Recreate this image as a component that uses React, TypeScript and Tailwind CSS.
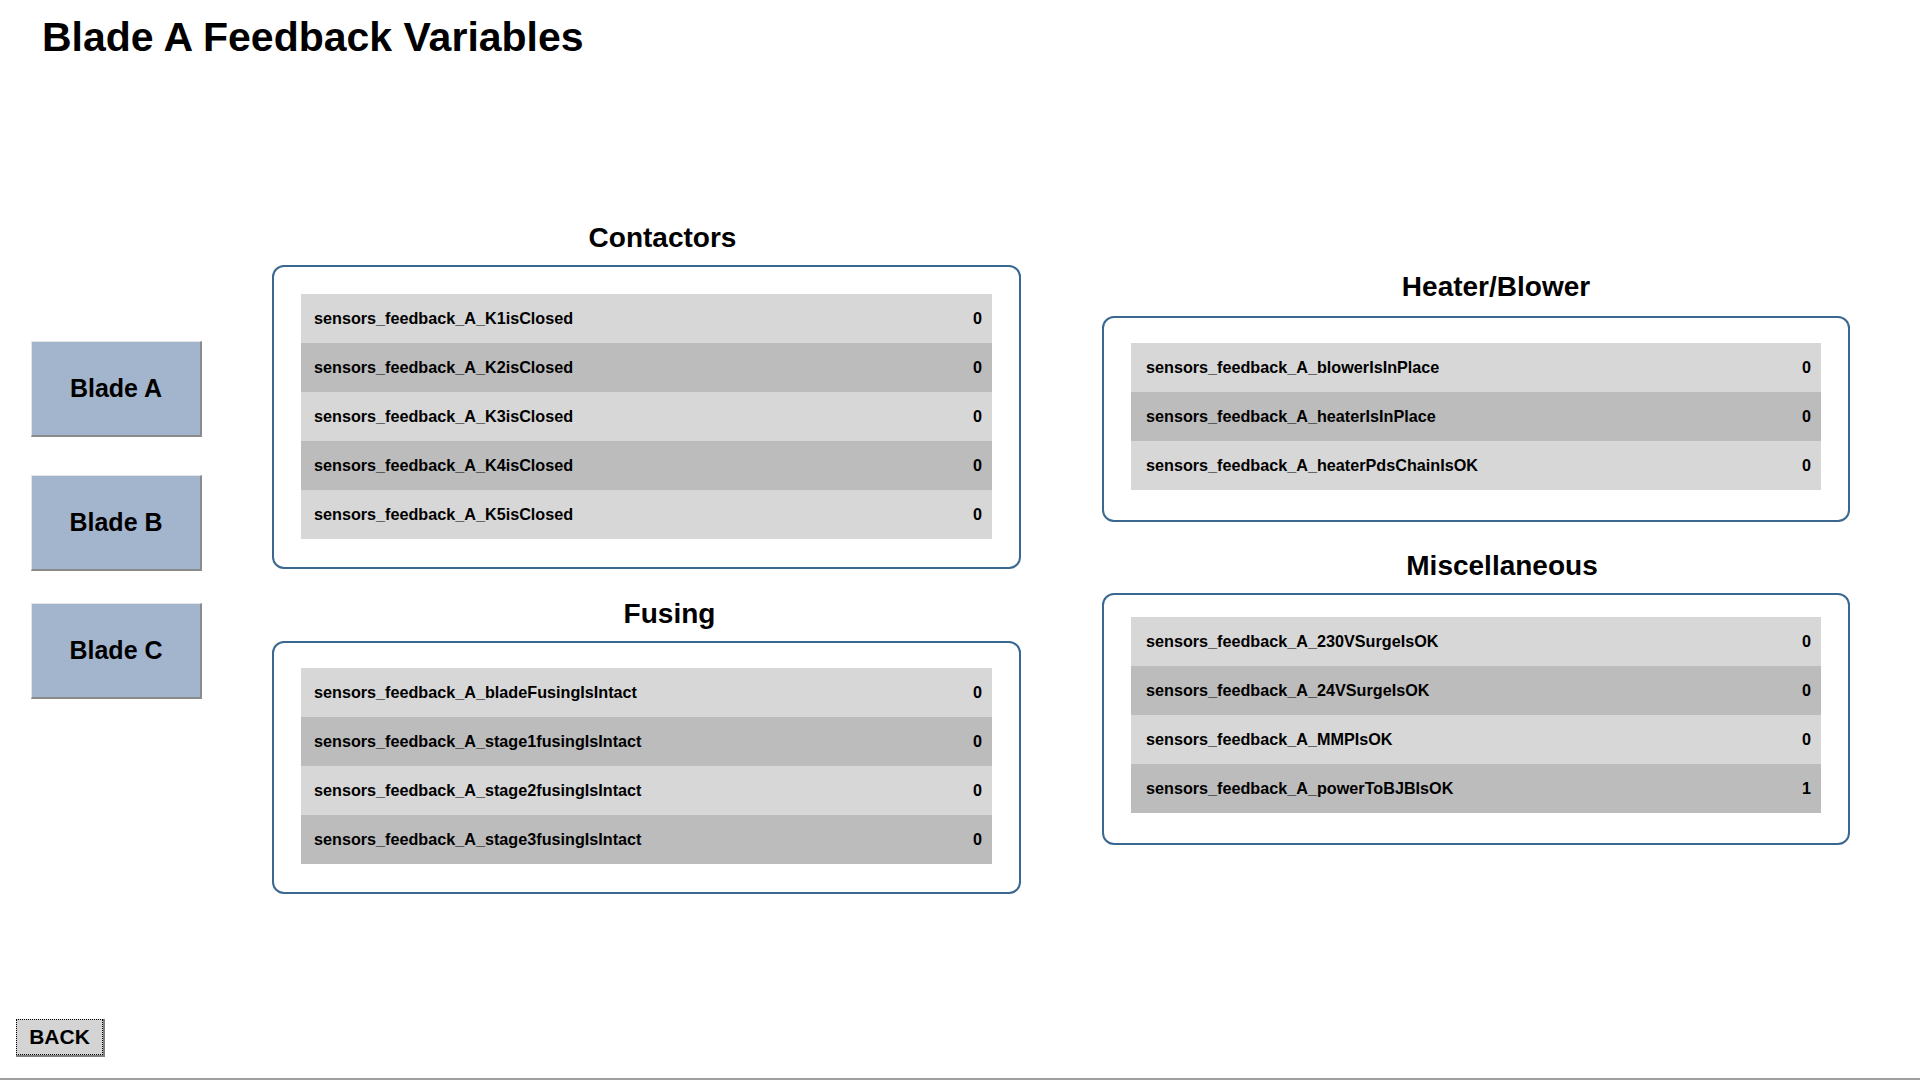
import React from "react";

type Item = { name: string; value: number };

const contactors: Item[] = [
  { name: "sensors_feedback_A_K1isClosed", value: 0 },
  { name: "sensors_feedback_A_K2isClosed", value: 0 },
  { name: "sensors_feedback_A_K3isClosed", value: 0 },
  { name: "sensors_feedback_A_K4isClosed", value: 0 },
  { name: "sensors_feedback_A_K5isClosed", value: 0 },
];

const fusing: Item[] = [
  { name: "sensors_feedback_A_bladeFusingIsIntact", value: 0 },
  { name: "sensors_feedback_A_stage1fusingIsIntact", value: 0 },
  { name: "sensors_feedback_A_stage2fusingIsIntact", value: 0 },
  { name: "sensors_feedback_A_stage3fusingIsIntact", value: 0 },
];

const heater: Item[] = [
  { name: "sensors_feedback_A_blowerIsInPlace", value: 0 },
  { name: "sensors_feedback_A_heaterIsInPlace", value: 0 },
  { name: "sensors_feedback_A_heaterPdsChainIsOK", value: 0 },
];

const misc: Item[] = [
  { name: "sensors_feedback_A_230VSurgeIsOK", value: 0 },
  { name: "sensors_feedback_A_24VSurgeIsOK", value: 0 },
  { name: "sensors_feedback_A_MMPIsOK", value: 0 },
  { name: "sensors_feedback_A_powerToBJBIsOK", value: 1 },
];

function Title({ text, offset }: { text: string; offset: string }) {
  return (
    <div className={`h-8 text-center text-[28px] leading-8 font-bold text-black ${offset}`}>
      {text}
    </div>
  );
}

function Panel({ items, pad, textPad }: { items: Item[]; pad: string; textPad: string }) {
  return (
    <div className={`rounded-[12px] border-2 border-[#3a6891] bg-white px-[27px] ${pad}`}>
      {items.map((it, i) => (
        <div
          key={it.name}
          className={`flex h-[49px] items-center justify-between pr-[10px] text-[16.2px] font-bold text-black ${textPad} ${
            i % 2 === 0 ? "bg-[#d7d7d7]" : "bg-[#bcbcbc]"
          }`}
        >
          <span>{it.name}</span>
          <span>{it.value}</span>
        </div>
      ))}
    </div>
  );
}

function BladeButton({ label, className }: { label: string; className?: string }) {
  return (
    <button
      className={`flex h-[96px] w-[171px] items-center justify-center border-t border-l border-t-[#e4e4e4] border-l-[#e4e4e4] border-r-2 border-b-2 border-r-[#8a8a8a] border-b-[#8a8a8a] bg-[#a3b5cc] text-[25px] font-bold text-black ${className ?? ""}`}
    >
      {label}
    </button>
  );
}

export default function App() {
  return (
    <div
      className="flex h-[1080px] w-full flex-col border-b-2 border-[#a0a0a0] bg-white"
      style={{ fontFamily: '"Liberation Sans", Arial, sans-serif' }}
    >
      <h1 className="mt-[17px] pl-[42px] text-[41px] leading-10 font-bold text-black">
        Blade A Feedback Variables
      </h1>

      <div className="flex items-start">
        <div className="ml-[31px] mt-[284px] flex flex-col">
          <BladeButton label="Blade A" />
          <BladeButton label="Blade B" className="mt-[38px]" />
          <BladeButton label="Blade C" className="mt-[32px]" />
        </div>

        <div className="ml-[70px] mt-[165px] flex w-[749px] flex-col">
          <Title text="Contactors" offset="pl-[32px]" />
          <div className="mt-[11px]">
            <Panel items={contactors} pad="pt-[27px] pb-[28px]" textPad="pl-[13px]" />
          </div>
          <div className="mt-[29px]">
            <Title text="Fusing" offset="pl-[46px]" />
          </div>
          <div className="mt-[11px]">
            <Panel items={fusing} pad="pt-[25px] pb-[28px]" textPad="pl-[13px]" />
          </div>
        </div>

        <div className="ml-[81px] mt-[214px] flex w-[748px] flex-col">
          <Title text="Heater/Blower" offset="pl-[40px]" />
          <div className="mt-[13px]">
            <Panel items={heater} pad="pt-[25px] pb-[30px]" textPad="pl-[15px]" />
          </div>
          <div className="mt-[28px]">
            <Title text="Miscellaneous" offset="pl-[52px]" />
          </div>
          <div className="mt-[11px]">
            <Panel items={misc} pad="pt-[22px] pb-[30px]" textPad="pl-[15px]" />
          </div>
        </div>
      </div>

      <div className="mt-auto pb-[21px] pl-[16px]">
        <button className="h-[38px] w-[89px] border-r-2 border-b-2 border-[#808080] bg-[#d4d4d4] p-0">
          <div className="flex h-full w-full items-center justify-center border border-dotted border-black text-[21px] font-bold text-black">
            BACK
          </div>
        </button>
      </div>
    </div>
  );
}
